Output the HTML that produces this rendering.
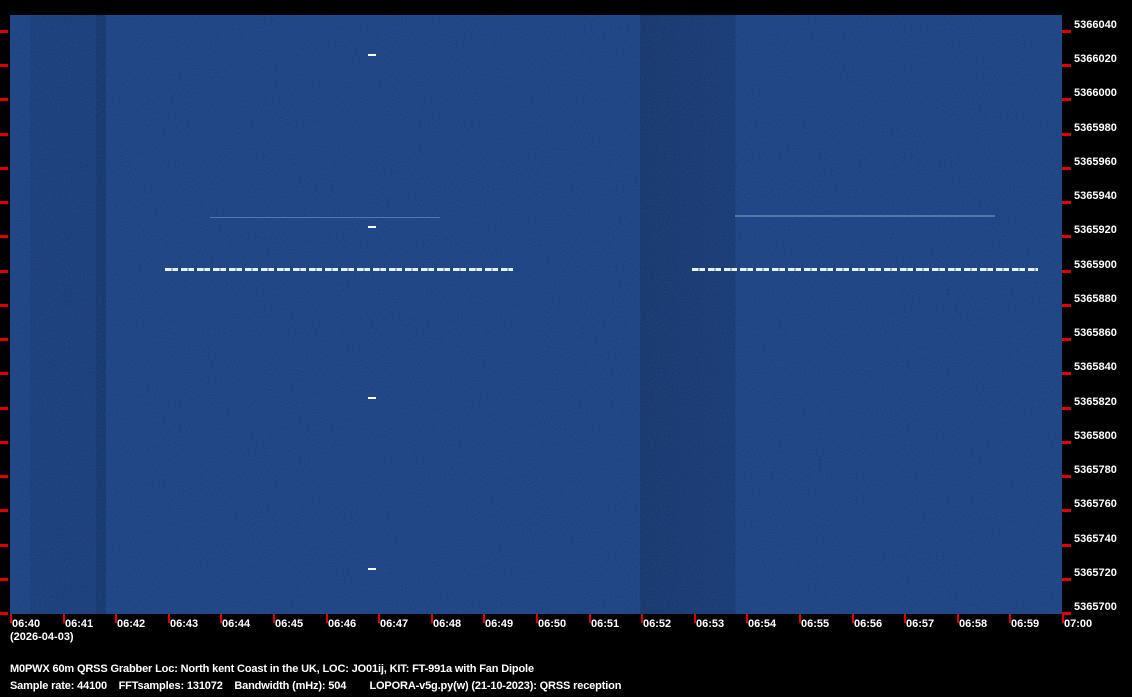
<!DOCTYPE html>
<html><head><style>
body{margin:0;background:#000;width:1132px;height:697px;overflow:hidden;position:relative;font-family:"Liberation Sans",sans-serif;font-weight:bold;font-size:11px;color:#fff}
.wf{position:absolute;left:10px;top:15px;width:1052px;height:599px;background:
linear-gradient(90deg,rgba(0,0,0,0) 0,rgba(0,0,0,0) 20px,rgba(0,10,40,.1) 20px,rgba(0,10,40,.1) 86px,rgba(0,10,40,.25) 86px,rgba(0,10,40,.25) 96px,rgba(0,0,0,0) 96px,rgba(0,0,0,0) 630px,rgba(0,10,40,.25) 630px,rgba(0,10,40,.18) 725px,rgba(0,0,0,0) 726px),#163c7c;overflow:hidden}
.t{position:absolute;background:#e00000}
.l{position:absolute;white-space:nowrap}
.sig{position:absolute;height:3px;background:repeating-linear-gradient(90deg,#e8f0ff 0 6px,#8fb0e0 6px 8px,#e8f0ff 8px 13px,rgba(0,0,0,0) 13px 16px)}
</style></head><body>
<div class="wf">
<svg width="1052" height="599" style="position:absolute;left:0;top:0"><filter id="n"><feTurbulence type="fractalNoise" baseFrequency="0.9" numOctaves="1" seed="3"/><feColorMatrix values="0 0 0 0 0.25  0 0 0 0 0.45  0 0 0 0 0.85  0 0 0 0.18 0"/></filter><rect width="1052" height="599" filter="url(#n)"/></svg>
<div class="sig" style="left:155px;top:253px;width:348px"></div>
<div class="sig" style="left:682px;top:253px;width:346px"></div>
<div style="position:absolute;left:200px;top:202px;width:230px;height:1px;background:rgba(160,190,240,.4)"></div>
<div style="position:absolute;left:725px;top:200px;width:260px;height:2px;background:rgba(160,190,240,.4)"></div>
<div style="position:absolute;left:358px;top:39px;width:8px;height:2px;background:#fff"></div>
<div style="position:absolute;left:358px;top:211px;width:8px;height:2px;background:#fff"></div>
<div style="position:absolute;left:358px;top:382px;width:8px;height:2px;background:#fff"></div>
<div style="position:absolute;left:358px;top:553px;width:8px;height:2px;background:#fff"></div>
</div>
<div id="ax"></div>
<div class="l" style="left:10px;top:631px">(2026-04-03)</div>
<div class="l" style="left:10px;top:663px;letter-spacing:-0.15px">M0PWX 60m QRSS Grabber Loc: North kent Coast in the UK, LOC: JO01ij, KIT: FT-991a with Fan Dipole</div>
<div class="l" style="left:10px;top:680px;letter-spacing:-0.15px">Sample rate: 44100&nbsp;&nbsp;&nbsp;&nbsp;FFTsamples: 131072&nbsp;&nbsp;&nbsp;&nbsp;Bandwidth (mHz): 504&nbsp;&nbsp;&nbsp;&nbsp;&nbsp;&nbsp;&nbsp;&nbsp;LOPORA-v5g.py(w) (21-10-2023): QRSS reception</div>
<script>
var ax=document.getElementById('ax'),h='';
for(var i=0;i<=17;i++){var y=Math.round(31+i*34.24);
h+='<div class="t" style="left:0;top:'+(y-1)+'px;width:8px;height:3px"></div>';
h+='<div class="t" style="left:1062px;top:'+(y-1)+'px;width:9px;height:3px"></div>';
h+='<div class="l" style="left:1074px;top:'+(y-12)+'px">'+(5366040-i*20)+'</div>';}
for(var j=0;j<=20;j++){var x=Math.round(10+j*52.6);
h+='<div class="t" style="left:'+x+'px;top:614px;width:2px;height:9px"></div>';
var m=40+j,lab=m<60?'06:'+m:'07:00';
h+='<div class="l" style="left:'+(x+2)+'px;top:618px">'+lab+'</div>';}
ax.innerHTML=h;
</script>
</body></html>
